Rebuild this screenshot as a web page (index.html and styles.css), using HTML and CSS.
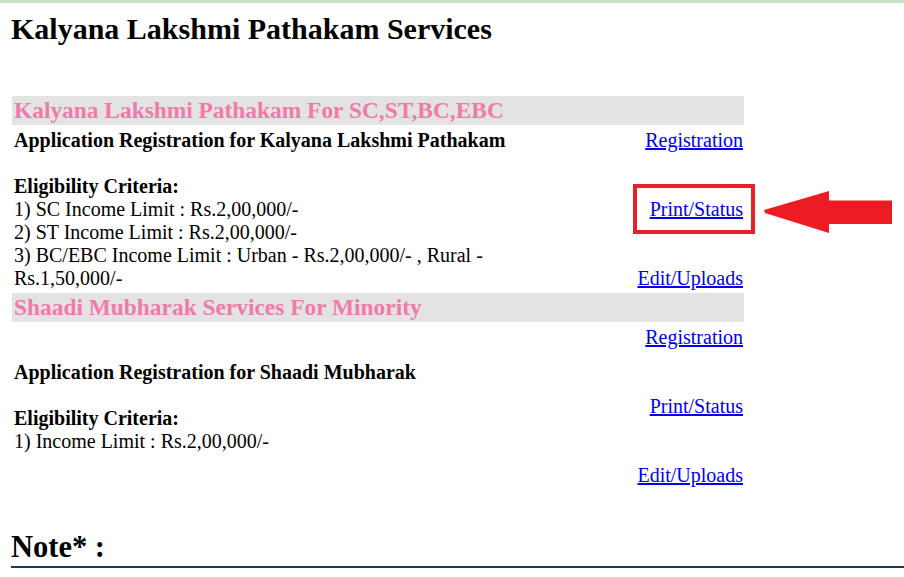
FILE: index.html
```html
<!DOCTYPE html>
<html>
<head>
<meta charset="utf-8">
<title>Kalyana Lakshmi Pathakam Services</title>
<link rel="stylesheet" href="styles.css">
</head>
<body>
<div class="topline"></div>
<div class="page">
  <h1 class="title">Kalyana Lakshmi Pathakam Services</h1>

  <div class="services">
    <div class="sec-head">Kalyana Lakshmi Pathakam For SC,ST,BC,EBC</div>
    <div class="sec-row">
      <div class="info">
        <b>Application Registration for Kalyana Lakshmi Pathakam</b><br><br>
        <b>Eligibility Criteria:</b><br>
        1) SC Income Limit : Rs.2,00,000/-<br>
        2) ST Income Limit : Rs.2,00,000/-<br>
        3) BC/EBC Income Limit : Urban - Rs.2,00,000/- , Rural -<br>
        Rs.1,50,000/-
      </div>
      <div class="links">
        <a href="#">Registration</a><br><br><br>
        <span class="hl"><a href="#">Print/Status</a><span class="box"></span><svg class="arrow" width="129" height="43" viewBox="0 0 129 43"><polygon points="0,19 1,22 65,42 65,33 128,33 128,9.5 65,9.5 65,0" fill="#ed1c24"/></svg></span><br><br><br>
        <a href="#">Edit/Uploads</a>
      </div>
    </div>

    <div class="sec-head">Shaadi Mubharak Services For Minority</div>
    <div class="sec-row">
      <div class="info">
        <b>Application Registration for Shaadi Mubharak</b><br><br>
        <b>Eligibility Criteria:</b><br>
        1) Income Limit : Rs.2,00,000/-
      </div>
      <div class="links">
        <a href="#">Registration</a><br><br><br>
        <a href="#">Print/Status</a><br><br><br>
        <a href="#">Edit/Uploads</a>
      </div>
    </div>
  </div>

  <h2 class="note">Note* :</h2>
</div>
</body>
</html>
```

FILE: styles.css
```css
html, body {
  margin: 0;
  padding: 0;
  background: #ffffff;
}
body {
  font-family: "Liberation Serif", "Times New Roman", serif;
  color: #000000;
}
.topline {
  height: 3px;
  background: #c8e4c8;
}
.page {
  padding-left: 11px;
}
.title {
  margin: 0;
  padding-top: 9px;
  font-size: 30px;
  line-height: 34px;
  font-weight: bold;
}
.services {
  width: 732px;
  margin: 50px 0 0 1px;
  display: flex;
  flex-direction: column;
}
.sec-head {
  background: #e3e3e3;
  height: 29px;
  line-height: 29px;
  padding-left: 2px;
  color: #f07aaa;
  font-size: 23.4px;
  font-weight: bold;
}
.sec-row {
  display: flex;
  justify-content: space-between;
  align-items: center;
  padding: 4px 1px 3px 2px;
  font-size: 20px;
  line-height: 23px;
}
.links {
  text-align: right;
}
.links a {
  color: #0000ee;
  text-decoration: underline;
}
.hl {
  position: relative;
}
.box {
  position: absolute;
  left: -17px;
  top: -14px;
  width: 114px;
  height: 42px;
  border: 4px solid #e8202a;
}
.arrow {
  position: absolute;
  left: 114px;
  top: -7px;
}
.note {
  margin: 40px 0 0 0;
  font-size: 30.5px;
  line-height: 34px;
  font-weight: bold;
  border-bottom: 2px solid #173a60;
  padding-bottom: 2px;
}
```
